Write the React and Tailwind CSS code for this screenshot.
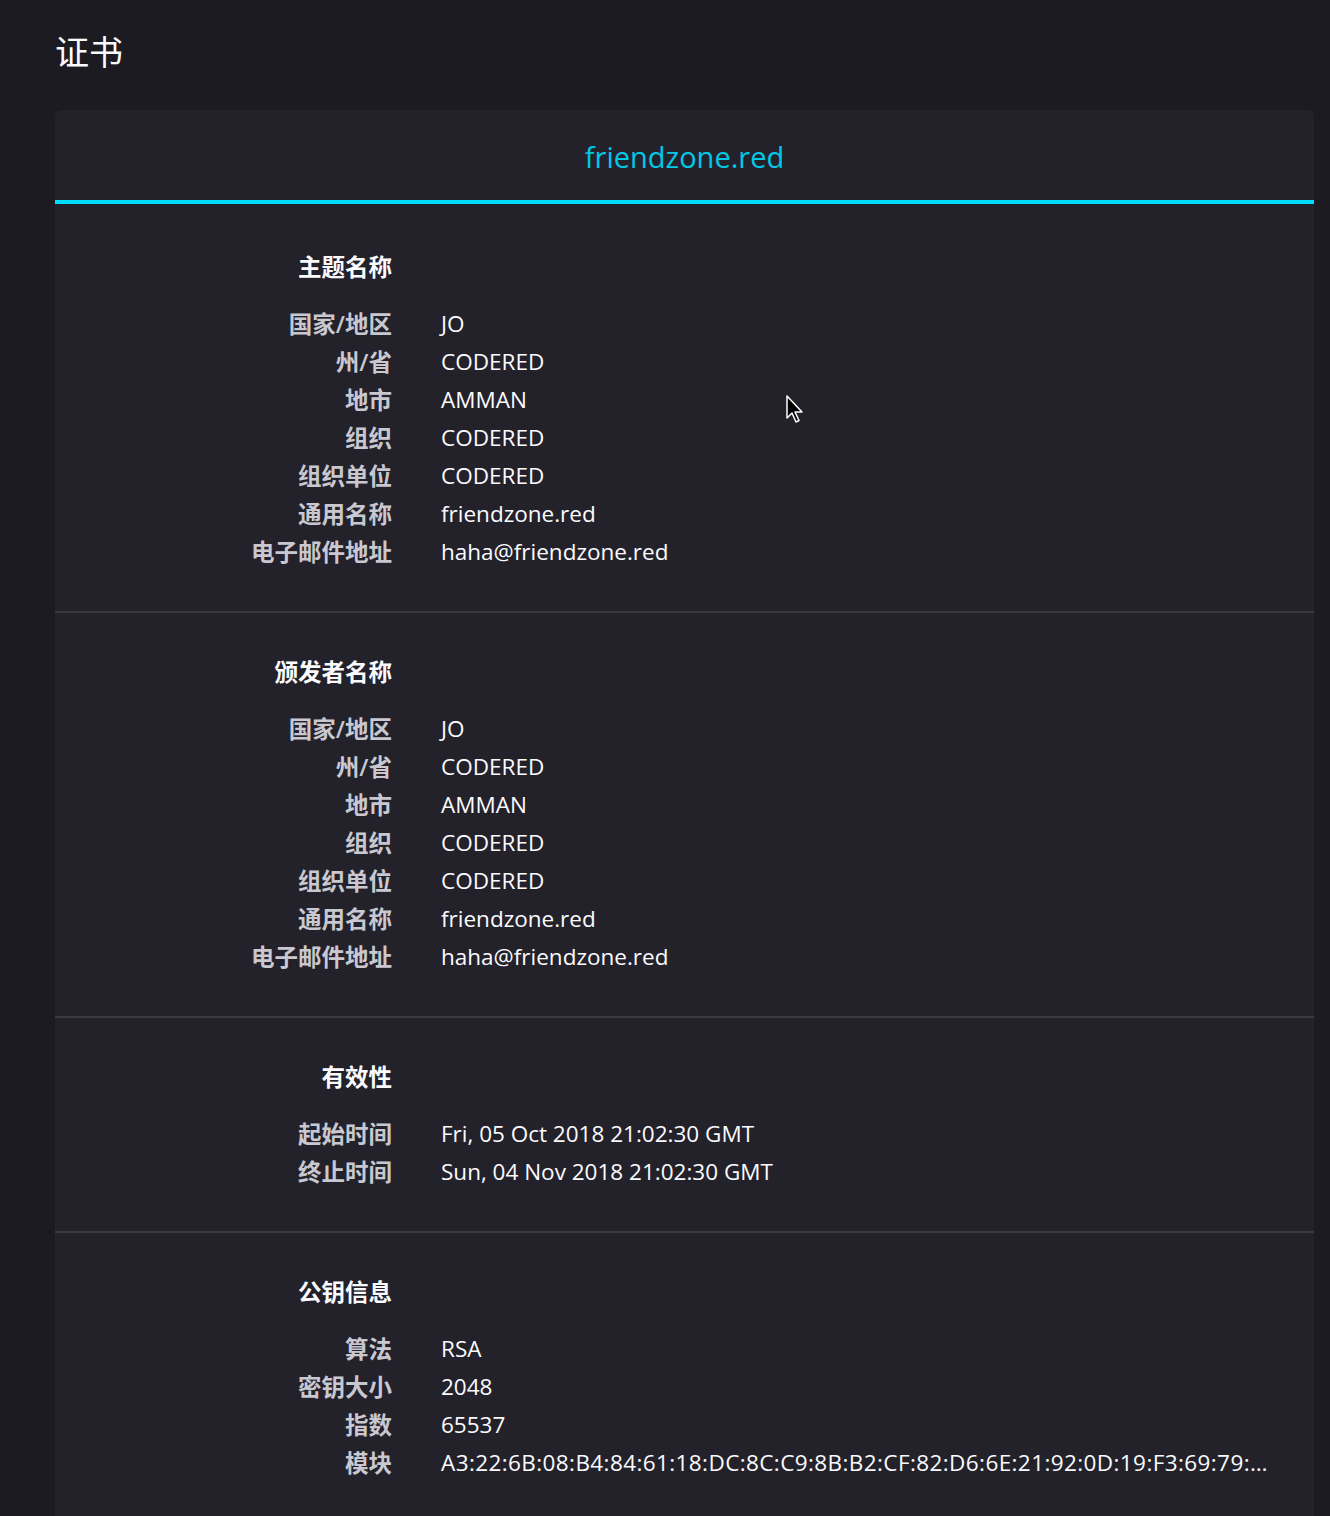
import React from 'react';

const nameRows = [
    ['国家/地区', 'JO'],
    ['州/省', 'CODERED'],
    ['地市', 'AMMAN'],
    ['组织', 'CODERED'],
    ['组织单位', 'CODERED'],
    ['通用名称', 'friendzone.red'],
    ['电子邮件地址', 'haha@friendzone.red'],
];

const sections = [
    { title: '主题名称', rows: nameRows },
    { title: '颁发者名称', rows: nameRows },
    {
        title: '有效性',
        rows: [
            ['起始时间', 'Fri, 05 Oct 2018 21:02:30 GMT'],
            ['终止时间', 'Sun, 04 Nov 2018 21:02:30 GMT'],
        ],
    },
    {
        title: '公钥信息',
        rows: [
            ['算法', 'RSA'],
            ['密钥大小', '2048'],
            ['指数', '65537'],
            ['模块', 'A3:22:6B:08:B4:84:61:18:DC:8C:C9:8B:B2:CF:82:D6:6E:21:92:0D:19:F3:69:79:…', true],
        ],
    },
];

const Section = ({ title, rows, first }) => (
    <div className={`${first ? 'pt-[44px]' : 'pt-[40px] border-t-2 border-[#3a3942]'} pb-[40px]`}>
        <div className="grid grid-cols-[337px_1fr] gap-x-[49px] pr-[46px]">
            <div className="text-right font-bold text-[23.5px] text-[#fbfbfe] leading-[38px] mb-[19px]">{title}</div>
            <div />
            {rows.map(([label, value, wide], i) => (
                <React.Fragment key={i}>
                    <div className="text-right font-semibold text-[23.5px] text-[#c9c8d0] leading-[38px] h-[38px]">{label}</div>
                    <div className={`text-[#fbfbfe] text-[22.5px] leading-[38px] h-[38px] whitespace-nowrap min-w-0 ${wide ? 'tracking-[0.4px]' : ''}`}>{value}</div>
                </React.Fragment>
            ))}
        </div>
    </div>
);

export default function App() {
    return (
        <div
            className="min-h-[1516px] bg-[#1c1b22] pl-[55px] pr-[16px] pt-[30px] text-[22px]"
            style={{ fontFamily: '"Open Sans", "Noto Sans CJK SC", sans-serif' }}
        >
            <h1 className="text-[34px] leading-[44px] text-[#fbfbfe] mb-[36px]">证书</h1>
            <div className="relative bg-[#23222b] rounded-t-[6px] overflow-hidden">
                <div className="h-[94px] flex items-center justify-center border-b-4 border-[#00ddff] pt-[4px]">
                    <span className="text-[29px] text-[#00c8e6]">friendzone.red</span>
                </div>
                {sections.map((s, i) => (
                    <Section key={i} title={s.title} rows={s.rows} first={i === 0} />
                ))}
                <svg className="absolute left-[731px] top-[285px]" width="20" height="30" viewBox="0 0 20 30">
                    <path d="M1 1 L1 23 L6 18 L10 27 L13 25.5 L9 17 L16 17 Z" fill="#000" stroke="#fff" strokeWidth="1.5" strokeLinejoin="round" />
                </svg>
            </div>
        </div>
    );
}
